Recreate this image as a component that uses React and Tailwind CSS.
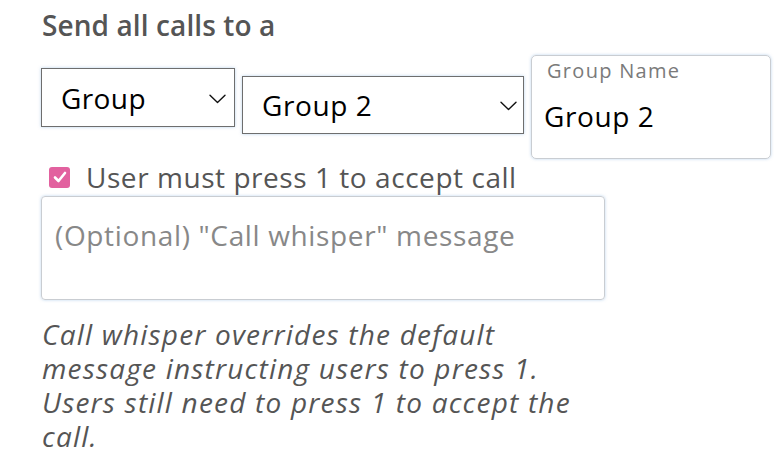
import React from "react";

function Chevron({ className }) {
  return (
    <svg className={className} width="17" height="10" viewBox="0 0 17 10" fill="none">
      <path d="M1 1.2 L8.5 8.5 L16 1.2" stroke="#111" strokeWidth="1.4" strokeLinecap="round" strokeLinejoin="round" />
    </svg>
  );
}

export default function App() {
  return (
    <div className="w-[784px] h-[468px] bg-white font-['Open_Sans',sans-serif] overflow-hidden pl-[41px] pt-[6px]">
      <div className="text-[28px] leading-[38px] font-semibold text-[#555] pl-[1px] tracking-[0.1px]">Send all calls to a</div>
      <div className="flex items-start mt-[11px]">
        <div className="mt-[13px] w-[194px] h-[59px] border border-[#6e6e6e] shadow-[0_0_3px_rgba(120,170,220,0.5)] flex items-center pl-[19px] pr-[8px] justify-between">
          <span className="text-[28px] text-black leading-none tracking-[0.4px]">Group</span>
          <Chevron className="mt-[2px]" />
        </div>
        <div className="ml-[7px] mt-[21px] w-[282px] h-[58px] border border-[#6e6e6e] shadow-[0_0_3px_rgba(120,170,220,0.5)] flex items-center pl-[19px] pr-[6px] justify-between">
          <span className="text-[28px] text-black leading-none tracking-[0.6px]">Group 2</span>
          <Chevron className="mt-[2px]" />
        </div>
        <div className="ml-[7px] w-[240px] h-[104px] rounded-[5px] border border-[#c9cdd2] shadow-[0_0_3px_rgba(120,170,220,0.5)] flex flex-col pl-[12px]">
          <span className="text-[20px] leading-none text-[#7a7a7a] mt-[5px] pl-[3px] tracking-[1.3px]">Group Name</span>
          <span className="text-[28px] leading-none text-black mt-[21px] tracking-[0.6px]">Group 2</span>
        </div>
      </div>
      <div className="flex items-center mt-[5px] h-[26px]">
        <div className="ml-[8px] w-[21px] h-[21px] rounded-[3px] bg-[#e2619f] flex items-center justify-center">
          <svg width="14" height="12" viewBox="0 0 14 12" fill="none">
            <path d="M2 6.5 L5.5 10 L12 2" stroke="white" strokeWidth="2.6" strokeLinecap="round" strokeLinejoin="round" />
          </svg>
        </div>
        <span className="ml-[16px] text-[28px] leading-none text-[#555] tracking-[0.55px]">User must press 1 to accept call</span>
      </div>
      <div className="mt-[6px] w-[564px] h-[104px] rounded-[4px] border border-[#c9cdd2] shadow-[0_0_3px_rgba(120,170,220,0.5)] pl-[13px] pt-[24px]">
        <span className="text-[28px] leading-none text-[#888] tracking-[0.65px]">(Optional) "Call whisper" message</span>
      </div>
      <div className="mt-[17px] italic text-[28px] leading-[34px] text-[#555] pl-[1px] tracking-[1.2px] whitespace-nowrap">
        Call whisper overrides the default
        <br />
        message instructing users to press 1.
        <br />
        Users still need to press 1 to accept the
        <br />
        call.
      </div>
    </div>
  );
}
